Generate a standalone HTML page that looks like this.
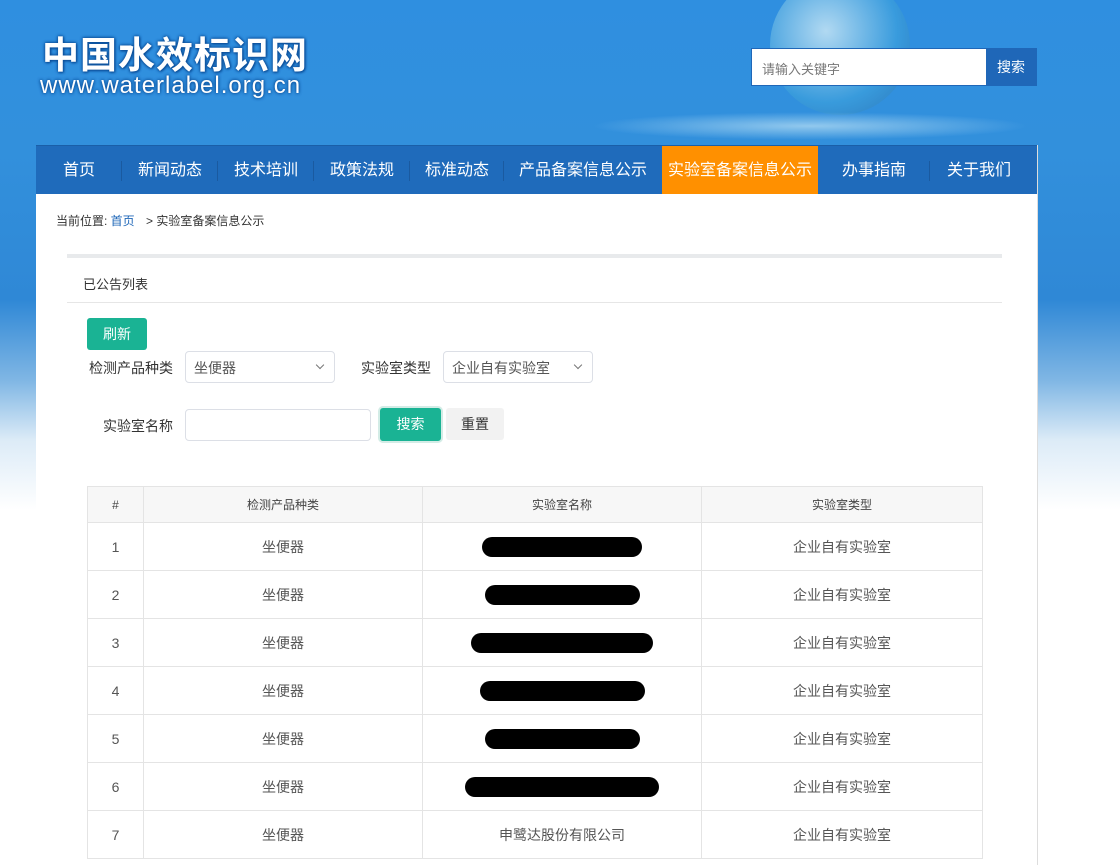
<!DOCTYPE html>
<html><head><meta charset="utf-8"><style>
*{margin:0;padding:0;box-sizing:border-box}
body{width:1120px;height:865px;overflow:hidden;font-family:"Liberation Sans","Noto Sans CJK SC",sans-serif;background:linear-gradient(180deg,#2f8fe0 0px,#3290dc 150px,#2f88d6 300px,#7fb6e4 380px,#dcebf7 440px,#fff 510px,#fff 865px);position:relative}
.logo{position:absolute;left:42px;top:30px;color:#fff;font-weight:bold;font-size:37px;letter-spacing:1px;text-shadow:0 0 3px #0c4f9a,0 0 3px #0c4f9a,1px 1px 2px #0c4f9a;font-family:"Noto Sans CJK SC",sans-serif;line-height:44px}
.url{position:absolute;left:40px;top:72px;color:#fff;font-size:24px;letter-spacing:1px;text-shadow:0 0 3px #0c4f9a,0 0 3px #0c4f9a;line-height:28px}
.globe{position:absolute;left:770px;top:-25px;width:140px;height:140px;border-radius:50%;background:radial-gradient(circle at 40% 40%,rgba(200,230,245,.85),rgba(60,160,220,.7) 60%,rgba(40,100,160,.6));}
.wave{position:absolute;left:590px;top:112px;width:440px;height:28px;border-radius:50%;background:radial-gradient(ellipse,rgba(170,215,242,.8),rgba(60,150,215,0) 70%)}
.search{position:absolute;left:751px;top:48px;width:286px;height:38px;display:flex;border:1px solid #1f67b8}
.search .in{flex:1;background:#fff;font-size:13px;color:#777;padding:10px 10px}
.search .b{width:50px;background:#1f67b8;color:#fff;font-size:14px;text-align:center;line-height:36px}
.main{position:absolute;left:36px;top:145px;width:1002px;height:720px;background:#fff;border-right:1px solid #ddd}
.nav{height:49px;background:#1f6bbb;display:flex;border-top:1px solid #1a5fa8}
.nav div{color:#fff;font-size:16px;line-height:49px;position:relative;text-align:center}
.nav div.s:after{content:"";position:absolute;right:0;top:15px;height:20px;border-right:1px solid #1a5aa0}
.nav .on{background:#ff9000}
.crumb{position:absolute;left:20px;top:67px;font-size:12px;color:#333}
.crumb a{color:#1f67b8;margin-right:8px}
.bar{position:absolute;left:31px;top:109px;width:935px;height:4px;background:#e8eaec}
.tit{position:absolute;left:47px;top:129px;font-size:13px;color:#333}
.line{position:absolute;left:31px;top:157px;width:935px;height:1px;background:#e6e6e6}
.btn{position:absolute;background:#1ab394;color:#fff;font-size:14px;text-align:center;border-radius:3px}
.lab{position:absolute;font-size:14px;color:#333}
.sel{position:absolute;border:1px solid #dcdfe6;border-radius:4px;height:32px;font-size:14px;color:#555;padding:6px 8px}
.sel i{position:absolute;right:11px;top:10px;width:6px;height:6px;border-right:1px solid #777;border-bottom:1px solid #777;transform:rotate(45deg)}
table{position:absolute;left:51px;top:341px;width:896px;border-collapse:collapse}
td,th{border:1px solid #e4e4e4;text-align:center;font-size:14px;color:#555;height:48px;font-weight:normal}
th{height:36px;background:#f7f7f7;font-size:12px;color:#444}
.blk{display:inline-block;height:20px;background:#000;border-radius:10px;vertical-align:middle}
</style></head><body>
<div class="globe"></div><div class="wave"></div>
<div class="logo">中国水效标识网</div>
<div class="url">www.waterlabel.org.cn</div>
<div class="search"><div class="in">请输入关键字</div><div class="b">搜索</div></div>
<div class="main">
<div class="nav">
<div class="s" style="width:86px">首页</div>
<div class="s" style="width:96px">新闻动态</div>
<div class="s" style="width:96px">技术培训</div>
<div class="s" style="width:96px">政策法规</div>
<div class="s" style="width:94px">标准动态</div>
<div style="width:158px">产品备案信息公示</div>
<div class="on" style="width:156px">实验室备案信息公示</div>
<div class="s" style="width:112px">办事指南</div>
<div style="width:98px">关于我们</div>
</div>
<div class="crumb">当前位置: <a>首页</a> &gt; 实验室备案信息公示</div>
<div class="bar"></div>
<div class="tit">已公告列表</div>
<div class="line"></div>
<div class="btn" style="left:51px;top:173px;width:60px;height:32px;line-height:32px">刷新</div>
<div class="lab" style="left:53px;top:213px">检测产品种类</div>
<div class="sel" style="left:149px;top:206px;width:150px">坐便器<i></i></div>
<div class="lab" style="left:325px;top:213px">实验室类型</div>
<div class="sel" style="left:407px;top:206px;width:150px">企业自有实验室<i></i></div>
<div class="lab" style="left:67px;top:271px">实验室名称</div>
<div class="sel" style="left:149px;top:264px;width:186px"></div>
<div class="btn" style="left:344px;top:263px;width:61px;height:33px;line-height:33px;box-shadow:0 0 0 2px #d3ece6">搜索</div>
<div class="btn" style="left:410px;top:263px;width:58px;height:32px;line-height:32px;background:#f2f2f2;color:#333">重置</div>
<table>
<tr><th style="width:56px">#</th><th style="width:279px">检测产品种类</th><th style="width:279px">实验室名称</th><th>实验室类型</th></tr>
<tr><td>1</td><td>坐便器</td><td><span class="blk" style="width:160px"></span></td><td>企业自有实验室</td></tr>
<tr><td>2</td><td>坐便器</td><td><span class="blk" style="width:155px"></span></td><td>企业自有实验室</td></tr>
<tr><td>3</td><td>坐便器</td><td><span class="blk" style="width:182px"></span></td><td>企业自有实验室</td></tr>
<tr><td>4</td><td>坐便器</td><td><span class="blk" style="width:165px"></span></td><td>企业自有实验室</td></tr>
<tr><td>5</td><td>坐便器</td><td><span class="blk" style="width:155px"></span></td><td>企业自有实验室</td></tr>
<tr><td>6</td><td>坐便器</td><td><span class="blk" style="width:194px"></span></td><td>企业自有实验室</td></tr>
<tr><td>7</td><td>坐便器</td><td>申鹭达股份有限公司</td><td>企业自有实验室</td></tr>
</table>
</div>
</body></html>
